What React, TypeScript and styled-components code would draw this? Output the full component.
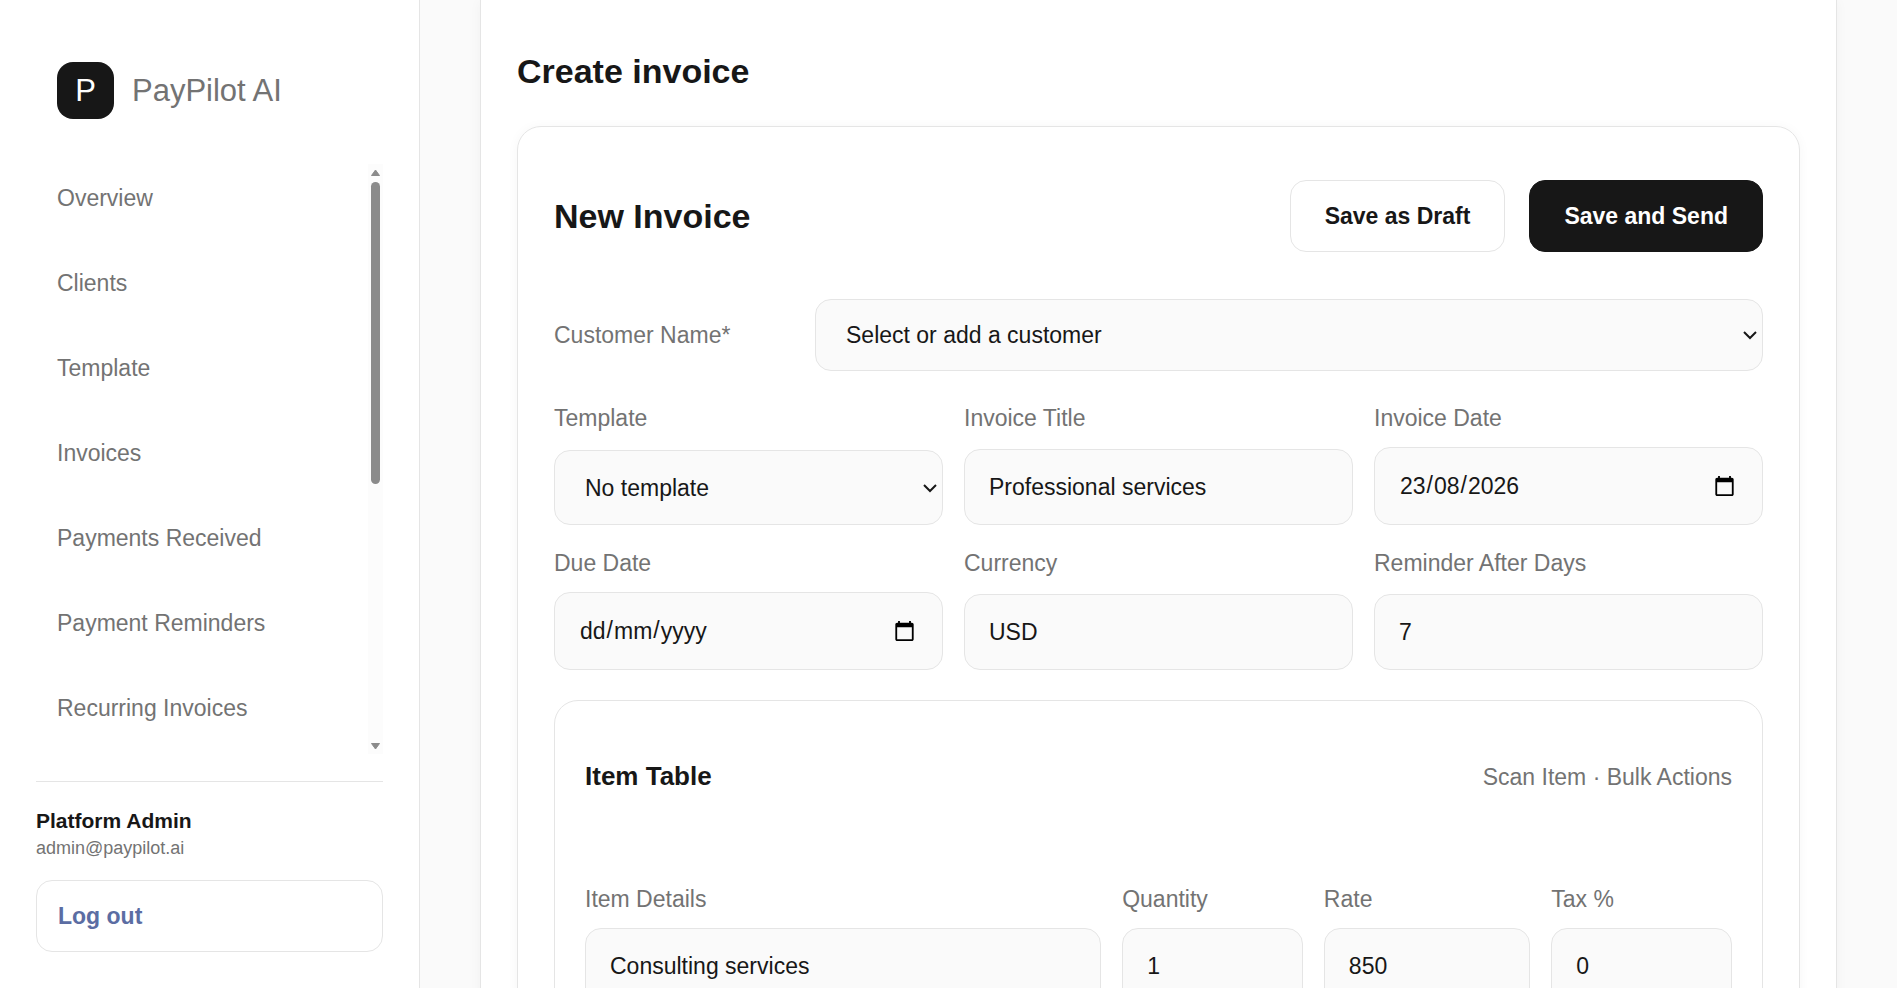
import React from "react";
import styled, { createGlobalStyle } from "styled-components";

const color = {
  ink: "#171717",
  muted: "#737373",
  line: "#e5e5e5",
  surface: "#ffffff",
  canvas: "#fafafa",
  link: "#5b6da3",
  thumb: "#8b8b8b",
};

const GlobalStyle = createGlobalStyle`
  *, *::before, *::after { box-sizing: border-box; }
  body {
    margin: 0;
    background: ${color.canvas};
    color: ${color.ink};
    font-family: "Liberation Sans", Arial, Helvetica, sans-serif;
    font-size: 23px;
    line-height: 34px;
  }
  button, input, select { font: inherit; color: inherit; }
`;

const Shell = styled.div`
  display: grid;
  grid-template-columns: 420px minmax(0, 1fr);
  height: 100vh;
  overflow: hidden;
`;

const Sidebar = styled.aside`
  display: flex;
  flex-direction: column;
  min-height: 0;
  padding: 36px;
  background: ${color.surface};
  border-right: 1px solid ${color.line};
`;

const Brand = styled.a`
  display: flex;
  align-items: center;
  gap: 18px;
  padding: 26px 21px 45px;
  color: ${color.muted};
  font-size: 31px;
  text-decoration: none;
`;

const BrandMark = styled.span`
  display: grid;
  place-items: center;
  width: 57px;
  height: 57px;
  border-radius: 16px;
  background: ${color.ink};
  color: #fff;
`;

const NavArea = styled.div`
  flex: 1;
  display: flex;
  min-height: 0;
`;

const Nav = styled.nav`
  flex: 1;
  display: flex;
  flex-direction: column;
  gap: 17px;
  overflow-y: auto;
  scrollbar-width: none;
`;

const NavLink = styled.a`
  flex: none;
  padding: 17px 21px;
  border-radius: 16px;
  color: ${color.muted};
  text-decoration: none;
`;

const ScrollTrack = styled.div`
  display: flex;
  flex-direction: column;
  align-items: center;
  width: 15px;
  padding: 5px 0 4px;
  background: #fcfcfc;
`;

const ScrollThumb = styled.div`
  flex: none;
  width: 9px;
  height: 52%;
  margin: 6px 0 auto;
  border-radius: 5px;
  background: ${color.thumb};
`;

const Account = styled.div`
  display: flex;
  flex-direction: column;
  margin-top: 27px;
  padding-top: 25px;
  border-top: 1px solid ${color.line};
`;

const AccountName = styled.strong`
  font-size: 21px;
  line-height: 28px;
`;

const AccountEmail = styled.span`
  margin-bottom: 18px;
  color: ${color.muted};
  font-size: 18px;
  line-height: 27px;
`;

const Button = styled.button<{ $tone?: "plain" | "solid" | "link" }>`
  height: 72px;
  padding: 0 ${(p) => (p.$tone === "link" ? 21 : 34)}px;
  border: 1px solid ${(p) => (p.$tone === "solid" ? color.ink : color.line)};
  border-radius: 16px;
  background: ${(p) => (p.$tone === "solid" ? color.ink : color.surface)};
  color: ${(p) => (p.$tone === "solid" ? "#fff" : p.$tone === "link" ? color.link : color.ink)};
  font-weight: 700;
  text-align: ${(p) => (p.$tone === "link" ? "left" : "center")};
  cursor: pointer;
`;

const Main = styled.main`
  padding: 0 60px;
  overflow-y: auto;
  scrollbar-width: none;
`;

const Page = styled.section`
  padding: 46px 36px 36px;
  background: ${color.surface};
  border: 1px solid ${color.line};
  border-top: 0;
  box-shadow: 0 1px 12px rgba(0, 0, 0, 0.04);
`;

const Heading = styled.h2`
  margin: 0;
  font-size: 34px;
  line-height: 50px;
`;

const InvoiceCard = styled.form`
  display: flex;
  flex-direction: column;
  gap: 30px;
  margin-top: 30px;
  padding: 36px;
  border: 1px solid ${color.line};
  border-radius: 24px;
  box-shadow: 0 1px 12px rgba(0, 0, 0, 0.04);
`;

const CardHeader = styled.header`
  display: flex;
  align-items: center;
  justify-content: space-between;
  padding: 17px 0;
`;

const Actions = styled.div`
  display: flex;
  gap: 24px;
`;

const CustomerRow = styled.div`
  display: grid;
  grid-template-columns: 240px minmax(0, 1fr);
  align-items: center;
  gap: 21px;
`;

const FieldGrid = styled.div<{ $columns: string }>`
  display: grid;
  grid-template-columns: ${(p) => p.$columns};
  gap: 21px;
`;

const Field = styled.div`
  display: flex;
  flex-direction: column;
  justify-content: space-between;
  gap: 12px;
  min-width: 0;
`;

const Label = styled.label`
  color: ${color.muted};
`;

const Input = styled.input`
  width: 100%;
  height: 76px;
  padding: 0 24px;
  border: 1px solid ${color.line};
  border-radius: 16px;
  background: ${color.canvas};
`;

/* Day, month and year are placed by column; the separators fill the columns left between them. */
const DateInput = styled(Input)`
  height: 78px;

  &::-webkit-datetime-edit-fields-wrapper {
    display: inline-grid;
    grid-auto-flow: column;
  }
  &::-webkit-datetime-edit-text { grid-row: 1; }
  &::-webkit-datetime-edit-day-field { grid-area: 1 / 1; }
  &::-webkit-datetime-edit-month-field { grid-area: 1 / 3; }
  &::-webkit-datetime-edit-year-field { grid-area: 1 / 5; }
`;

const SelectBox = styled.div`
  position: relative;
  display: flex;

  svg {
    position: absolute;
    top: 50%;
    right: 5px;
    margin-top: -8px;
    pointer-events: none;
  }
`;

const SelectControl = styled.select<{ $height: number }>`
  appearance: none;
  width: 100%;
  height: ${(p) => p.$height}px;
  padding: 0 30px;
  border: 1px solid ${color.line};
  border-radius: 16px;
  background: ${color.canvas};
`;

const ItemPanel = styled.section`
  display: flex;
  flex-direction: column;
  gap: 60px;
  padding: 30px;
  border: 1px solid ${color.line};
  border-radius: 24px;
`;

const PanelHeader = styled.header`
  display: flex;
  align-items: center;
  justify-content: space-between;
  padding: 26px 0;
`;

const PanelTitle = styled.h3`
  margin: 0;
  font-size: 26px;
  line-height: 39px;
`;

const PanelHint = styled.span`
  color: ${color.muted};
`;

const navItems = [
  "Overview",
  "Clients",
  "Template",
  "Invoices",
  "Payments Received",
  "Payment Reminders",
  "Recurring Invoices",
];

function ScrollArrow({ path }: { path: string }) {
  return (
    <svg width="9" height="7" viewBox="0 0 9 7" fill={color.thumb} stroke={color.thumb} strokeLinejoin="round">
      <path d={path} />
    </svg>
  );
}

function Select({ id, text, height }: { id: string; text: string; height: number }) {
  return (
    <SelectBox>
      <SelectControl id={id} $height={height}>
        <option>{text}</option>
      </SelectControl>
      <svg width="16" height="16" viewBox="0 0 16 16" fill="none" stroke={color.ink} strokeWidth="2" aria-hidden="true">
        <path d="M2 5 8 11 14 5" />
      </svg>
    </SelectBox>
  );
}

function TextField({ id, label, value, type = "text" }: { id: string; label: string; value: string; type?: string }) {
  return (
    <Field>
      <Label htmlFor={id}>{label}</Label>
      <Input id={id} type={type} defaultValue={value} />
    </Field>
  );
}

function DateField({ id, label, value }: { id: string; label: string; value?: string }) {
  return (
    <Field>
      <Label htmlFor={id}>{label}</Label>
      <DateInput id={id} type="date" defaultValue={value} />
    </Field>
  );
}

export default function App() {
  return (
    <>
      <GlobalStyle />
      <Shell>
        <Sidebar>
          <Brand href="#home">
            <BrandMark>P</BrandMark>
            PayPilot AI
          </Brand>
          <NavArea>
            <Nav>
              {navItems.map((item) => (
                <NavLink key={item} href="#nav">
                  {item}
                </NavLink>
              ))}
            </Nav>
            <ScrollTrack aria-hidden="true">
              <ScrollArrow path="M4.5 1 8.5 6.5H.5z" />
              <ScrollThumb />
              <ScrollArrow path="M4.5 6 8.5 .5H.5z" />
            </ScrollTrack>
          </NavArea>
          <Account>
            <AccountName>Platform Admin</AccountName>
            <AccountEmail>admin@paypilot.ai</AccountEmail>
            <Button type="button" $tone="link">
              Log out
            </Button>
          </Account>
        </Sidebar>
        <Main>
          <Page>
            <Heading>Create invoice</Heading>
            <InvoiceCard>
              <CardHeader>
                <Heading as="h3">New Invoice</Heading>
                <Actions>
                  <Button type="button">Save as Draft</Button>
                  <Button type="button" $tone="solid">
                    Save and Send
                  </Button>
                </Actions>
              </CardHeader>
              <CustomerRow>
                <Label htmlFor="customer">Customer Name*</Label>
                <Select id="customer" text="Select or add a customer" height={72} />
              </CustomerRow>
              <FieldGrid $columns="repeat(3, minmax(0, 1fr))">
                <Field>
                  <Label htmlFor="template">Template</Label>
                  <Select id="template" text="No template" height={75} />
                </Field>
                <TextField id="title" label="Invoice Title" value="Professional services" />
                <DateField id="invoice-date" label="Invoice Date" value="2026-08-23" />
                <DateField id="due-date" label="Due Date" />
                <TextField id="currency" label="Currency" value="USD" />
                <TextField id="reminder" label="Reminder After Days" value="7" type="number" />
              </FieldGrid>
              <ItemPanel>
                <PanelHeader>
                  <PanelTitle>Item Table</PanelTitle>
                  <PanelHint>Scan Item · Bulk Actions</PanelHint>
                </PanelHeader>
                <FieldGrid $columns="20fr 7fr 8fr 7fr">
                  <TextField id="item" label="Item Details" value="Consulting services" />
                  <TextField id="quantity" label="Quantity" value="1" type="number" />
                  <TextField id="rate" label="Rate" value="850" type="number" />
                  <TextField id="tax" label="Tax %" value="0" type="number" />
                </FieldGrid>
              </ItemPanel>
            </InvoiceCard>
          </Page>
        </Main>
      </Shell>
    </>
  );
}
